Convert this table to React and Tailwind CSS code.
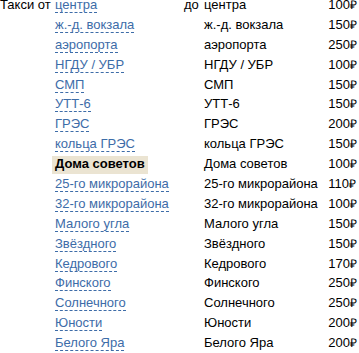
const routes = [
  ["центра", 100],
  ["ж.-д. вокзала", 150],
  ["аэропорта", 250],
  ["НГДУ / УБР", 100],
  ["СМП", 150],
  ["УТТ-6", 150],
  ["ГРЭС", 200],
  ["кольца ГРЭС", 150],
  ["Дома советов", 100],
  ["25-го микрорайона", 110],
  ["32-го микрорайона", 100],
  ["Малого угла", 150],
  ["Звёздного", 150],
  ["Кедрового", 170],
  ["Финского", 250],
  ["Солнечного", 250],
  ["Юности", 200],
  ["Белого Яра", 200],
];

const current = "Дома советов";

export default function App() {
  return (
    <div className="bg-white w-[359px] h-[353px] overflow-hidden text-black text-[13px] font-['Liberation_Sans',Arial,sans-serif]">
      <div className="grid grid-cols-[55px_129px_20px_1fr_auto] auto-rows-[19.9px] leading-[19.9px] -mt-[5px] pr-[2px]">
        {routes.map(([name, price], i) => (
          <div key={name} className="contents">
            <div className="whitespace-nowrap">{i === 0 ? "Такси от" : ""}</div>
            <div className="whitespace-nowrap">
              {name === current ? (
                <span className="bg-[#ebe4d2] font-bold px-[3px] -mx-[3px] pb-[3px]">
                  {name}
                </span>
              ) : (
                <a
                  href="#"
                  className="text-[#3d6ca8] border-b border-dashed border-[#3d6ca8]"
                >
                  {name}
                </a>
              )}
            </div>
            <div className="whitespace-nowrap">{i === 0 ? "до" : ""}</div>
            <div className="whitespace-nowrap">{name}</div>
            <div className="whitespace-nowrap">
              {price}
              <span className="text-[12px]">₽</span>
            </div>
          </div>
        ))}
      </div>
    </div>
  );
}
